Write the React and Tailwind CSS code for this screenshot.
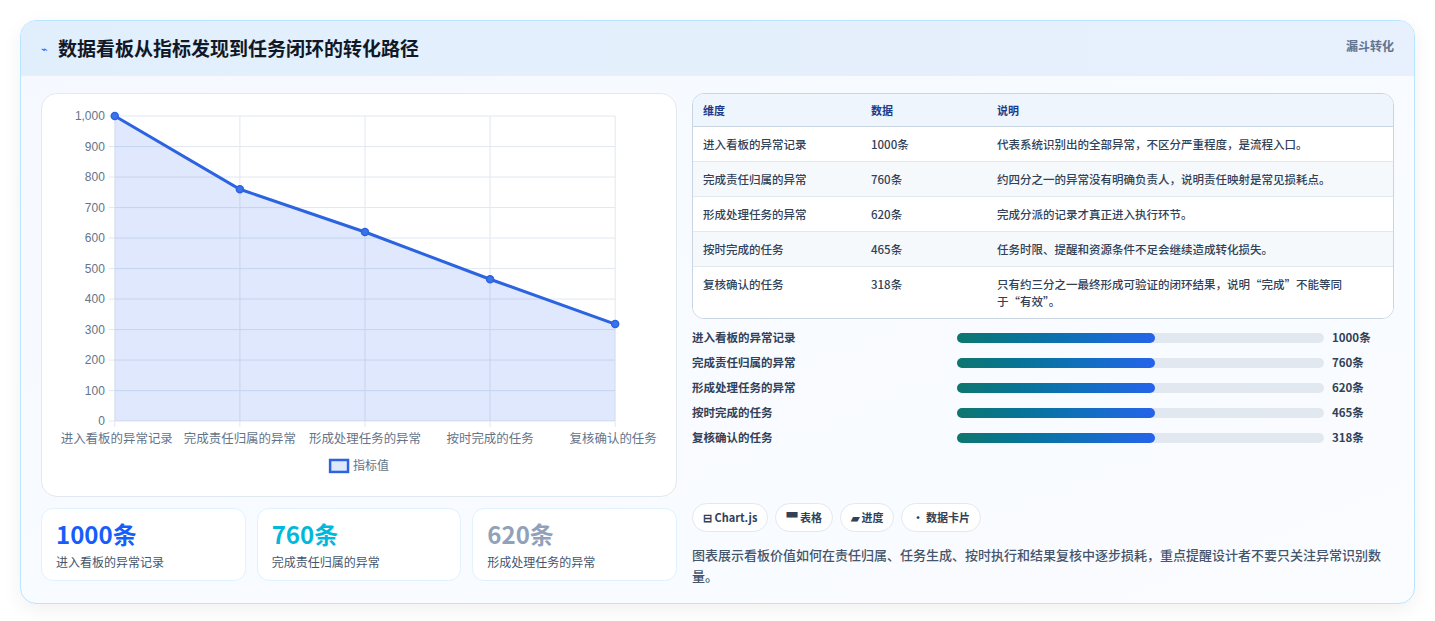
const rows = [
  ["进入看板的异常记录", "1000条", "代表系统识别出的全部异常，不区分严重程度，是流程入口。", 1000],
  ["完成责任归属的异常", "760条", "约四分之一的异常没有明确负责人，说明责任映射是常见损耗点。", 760],
  ["形成处理任务的异常", "620条", "完成分派的记录才真正进入执行环节。", 620],
  ["按时完成的任务", "465条", "任务时限、提醒和资源条件不足会继续造成转化损失。", 465],
  ["复核确认的任务", "318条", "只有约三分之一最终形成可验证的闭环结果，说明“完成”不能等同于“有效”。", 318],
];

const font = { fontFamily: '"Noto Sans CJK SC", "Noto Sans", sans-serif' };

function Chart() {
  const x0 = 73, x1 = 575, y0 = 22, y1 = 328;
  const xs = rows.map((_, i) => x0 + ((x1 - x0) * i) / 4);
  const ys = rows.map((r) => y1 - ((y1 - y0) * r[3]) / 1000);
  const pts = xs.map((x, i) => `${x},${ys[i]}`).join(" ");
  return (
    <svg viewBox="0 0 636 403" className="w-full h-full" style={{ fontFamily: '"Liberation Sans", "Noto Sans CJK SC", sans-serif' }}>
      {Array.from({ length: 11 }).map((_, i) => {
        const y = y1 - ((y1 - y0) * i) / 10;
        return (
          <g key={i}>
            <line x1={x0 - 6} x2={x1} y1={y} y2={y} stroke="#e2e8f0" />
            <text x={x0 - 10} y={y + 4} textAnchor="end" fontSize="12" fill="#64748b">
              {i === 10 ? "1,000" : i * 100}
            </text>
          </g>
        );
      })}
      {xs.map((x, i) => (
        <g key={i}>
          <line x1={x} x2={x} y1={y0} y2={y1 + 6} stroke="#e2e8f0" />
          <text x={i === 4 ? x - 2 : i === 0 ? x + 2 : x} y={y1 + 22} textAnchor="middle" fontSize="12.5" fill="#64748b">{rows[i][0]}</text>
        </g>
      ))}
      <polygon points={`${x0},${y1} ${pts} ${x1},${y1}`} fill="rgba(37,99,235,0.15)" />
      <polyline points={pts} fill="none" stroke="#2b63e0" strokeWidth="3" />
      {xs.map((x, i) => (
        <circle key={i} cx={x} cy={ys[i]} r="3.5" fill="#3b74ea" stroke="#2b63e0" strokeWidth="1.5" />
      ))}
      <rect x="289" y="367" width="18" height="12" fill="rgba(37,99,235,0.15)" stroke="#2b63e0" strokeWidth="2.5" />
      <text x="312" y="377" fontSize="12" fill="#64748b">指标值</text>
    </svg>
  );
}

export default function App() {
  return (
    <div className="min-h-[621px] bg-white pt-5 px-5" style={font}>
      <div className="rounded-2xl border border-sky-200 bg-gradient-to-br from-[#f5f9ff] to-[#fafcff] overflow-hidden shadow-[0_6px_20px_rgba(0,0,0,0.06)]">
        <div className="h-[55px] flex items-center justify-between px-5 bg-gradient-to-r from-[#e1effc] to-[#e8f0fd] border-b border-sky-100">
          <div className="flex items-center gap-2.5">
            <span className="text-blue-600 text-[11px]">⌁</span>
            <h1 className="text-[19px] font-bold text-[#111827]">数据看板从指标发现到任务闭环的转化路径</h1>
          </div>
          <span className="text-[12px] font-bold text-slate-500 self-start mt-4">漏斗转化</span>
        </div>
        <div className="flex gap-[15px] px-5 pt-[17px] pb-[17px]">
          <div className="w-[636px] flex flex-col gap-[11px]">
            <div className="h-[404px] rounded-2xl border border-slate-200 bg-white">
              <Chart />
            </div>
            <div className="grid grid-cols-3 gap-[11px]">
              {[["1000条", "text-blue-600"], ["760条", "text-cyan-500"], ["620条", "text-slate-400"]].map(([v, c], i) => (
                <div key={i} className="h-[73px] rounded-xl border border-sky-100 bg-white px-3.5 pt-2.5">
                  <div className={`text-[24px] font-bold leading-[30px] ${c}`}>{v}</div>
                  <div className="text-[12px] text-slate-600 mt-1">{rows[i][0]}</div>
                </div>
              ))}
            </div>
          </div>
          <div className="flex-1 flex flex-col">
            <div className="rounded-xl border border-slate-300 overflow-hidden bg-white">
              <div className="grid grid-cols-[168px_126px_1fr] bg-[#eef5fd] h-[33px] items-center px-2.5 text-[11px] font-bold text-[#1e3a8a] border-b border-slate-300">
                <span>维度</span><span>数据</span><span>说明</span>
              </div>
              {rows.map((r, i) => (
                <div key={i} className={`grid grid-cols-[168px_126px_1fr] px-2.5 pt-[9px] pb-[8px] leading-[17px] text-[11.5px] text-slate-700 font-medium border-b border-slate-200 last:border-0 ${i % 2 ? "bg-[#f5f9fc]" : "bg-white"}`}>
                  <span>{r[0]}</span><span>{r[1]}</span><span className="pr-2">{r[2]}</span>
                </div>
              ))}
            </div>
            <div className="mt-[9px] flex flex-col gap-[6px]">
              {rows.map((r, i) => (
                <div key={i} className="flex items-center h-[19px] text-[11.5px] font-bold text-slate-700">
                  <span className="w-[265px]">{r[0]}</span>
                  <div className="w-[367px] h-[10px] rounded-full bg-slate-200">
                    <div className="h-full w-[54%] rounded-full bg-gradient-to-r from-[#0f766e] to-[#2563eb]" />
                  </div>
                  <span className="ml-2">{r[1]}</span>
                </div>
              ))}
            </div>
            <div className="flex gap-[7px] mt-[56px]">
              {["⊟ Chart.js", "▀ 表格", "▰ 进度", "• 数据卡片"].map((t) => (
                <span key={t} className="h-[29px] px-2.5 flex items-center rounded-full border border-slate-200 bg-white text-[11px] font-bold text-slate-700">{t}</span>
              ))}
            </div>
            <p className="mt-3 pr-3 text-[13px] leading-[21px] text-slate-600 font-medium">图表展示看板价值如何在责任归属、任务生成、按时执行和结果复核中逐步损耗，重点提醒设计者不要只关注异常识别数量。</p>
          </div>
        </div>
      </div>
    </div>
  );
}
